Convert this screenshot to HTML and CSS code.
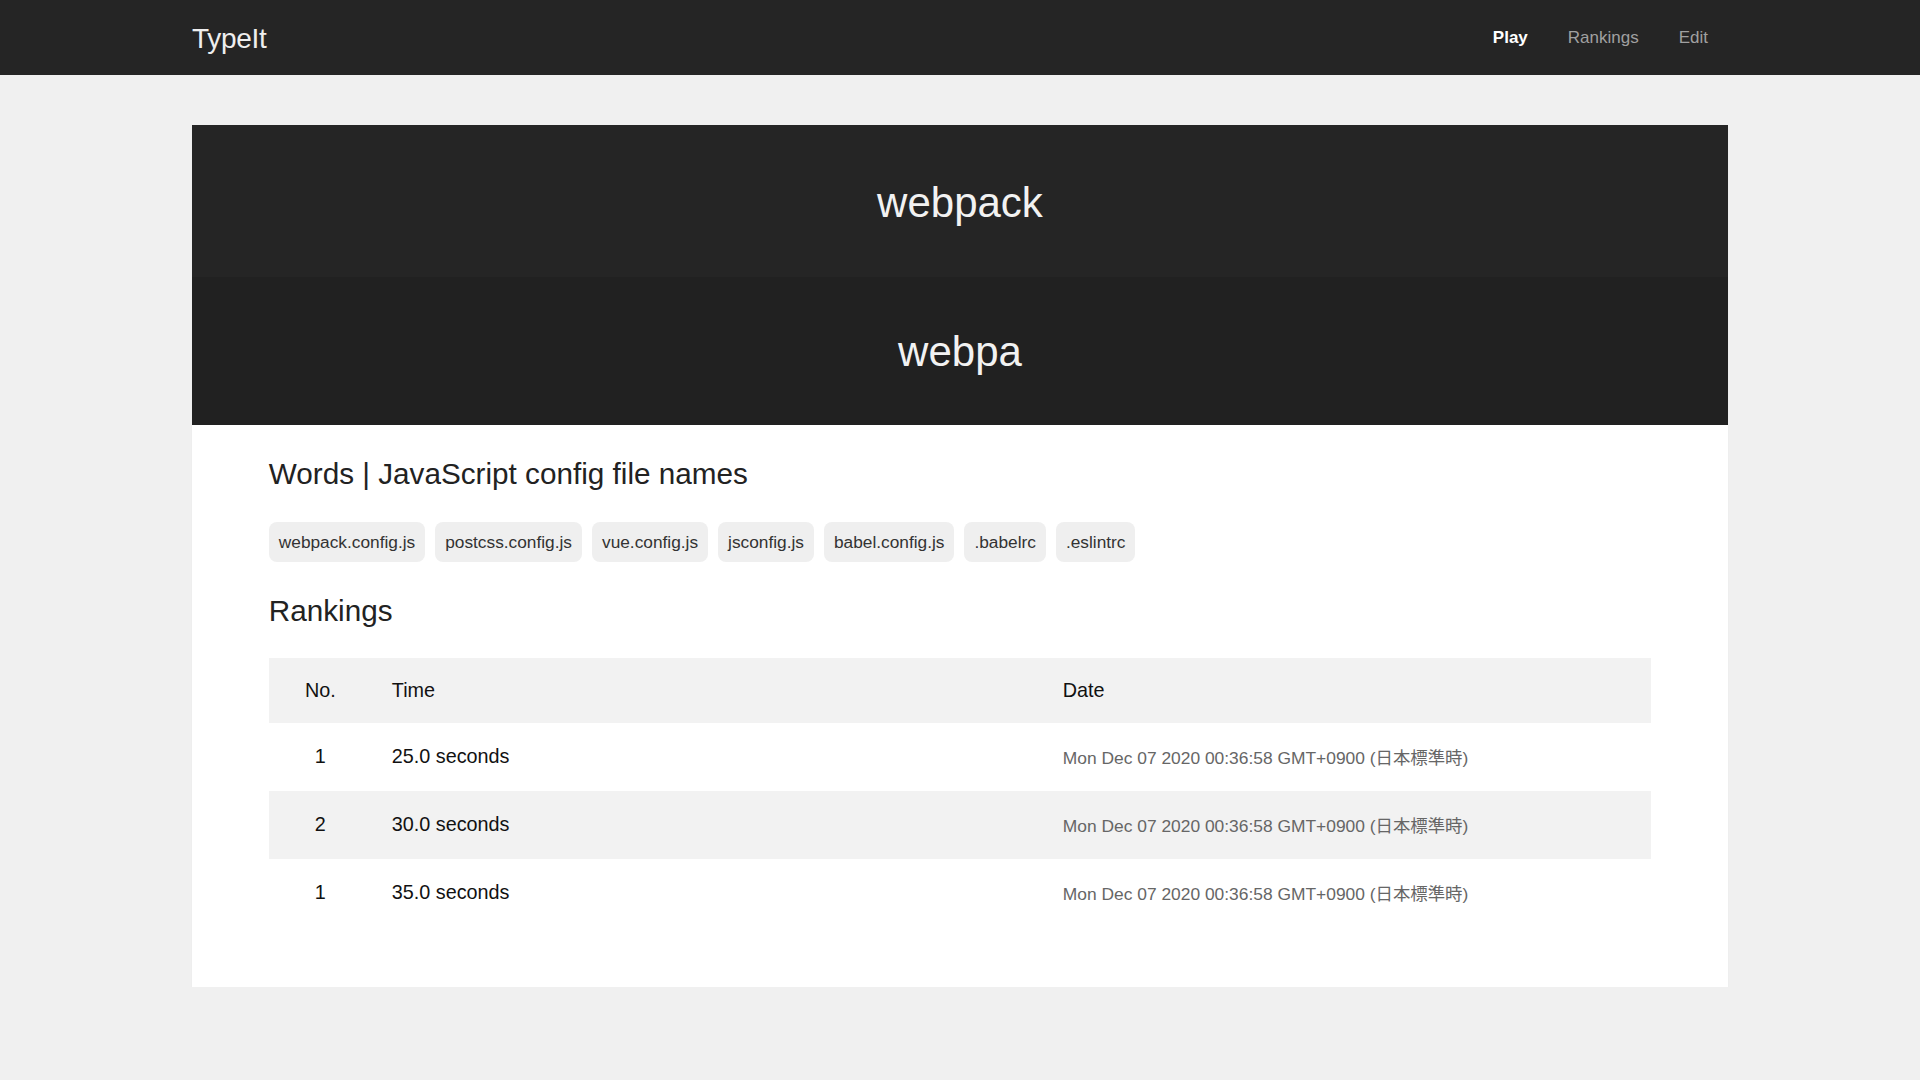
FILE: index.html
```html
<!DOCTYPE html>
<html lang="ja">
<head>
<meta charset="utf-8">
<title>TypeIt</title>
<link rel="stylesheet" href="styles.css">
</head>
<body>
<header class="navbar">
  <div class="nav-inner">
    <div class="logo">TypeIt</div>
    <nav class="nav-links">
      <a class="nav-link active">Play</a>
      <a class="nav-link">Rankings</a>
      <a class="nav-link">Edit</a>
    </nav>
  </div>
</header>
<main class="card">
  <section class="target">webpack</section>
  <section class="typed">webpa</section>
  <section class="content">
    <h2 class="heading">Words | JavaScript config file names</h2>
    <ul class="tags">
      <li class="tag">webpack.config.js</li>
      <li class="tag">postcss.config.js</li>
      <li class="tag">vue.config.js</li>
      <li class="tag">jsconfig.js</li>
      <li class="tag">babel.config.js</li>
      <li class="tag">.babelrc</li>
      <li class="tag">.eslintrc</li>
    </ul>
    <h2 class="heading rank-heading">Rankings</h2>
    <table class="ranking">
      <thead>
        <tr><th class="col-no">No.</th><th class="col-time">Time</th><th class="col-date">Date</th></tr>
      </thead>
      <tbody>
        <tr><td class="col-no">1</td><td class="col-time">25.0 seconds</td><td class="col-date date">Mon Dec 07 2020 00:36:58 GMT+0900 (日本標準時)</td></tr>
        <tr><td class="col-no">2</td><td class="col-time">30.0 seconds</td><td class="col-date date">Mon Dec 07 2020 00:36:58 GMT+0900 (日本標準時)</td></tr>
        <tr><td class="col-no">1</td><td class="col-time">35.0 seconds</td><td class="col-date date">Mon Dec 07 2020 00:36:58 GMT+0900 (日本標準時)</td></tr>
      </tbody>
    </table>
  </section>
</main>
</body>
</html>
```
FILE: styles.css
```css
* { box-sizing: border-box; }
html, body { margin: 0; padding: 0; }
body {
  background: #f0f0f0;
  font-family: "Liberation Sans", Arial, "Noto Sans CJK JP", sans-serif;
  color: #222;
}
.navbar {
  background: #252525;
  height: 75px;
}
.nav-inner {
  width: 80%;
  margin: 0 auto;
  height: 100%;
  display: flex;
  align-items: center;
  justify-content: space-between;
}
.logo {
  color: #eeeeee;
  font-size: 28px;
  letter-spacing: -0.3px;
  padding-top: 2px;
}
.nav-links { display: flex; }
.nav-link {
  color: #a0a0a0;
  font-size: 17px;
  padding: 0 20px;
  text-decoration: none;
}
.nav-link.active { color: #ffffff; font-weight: bold; }
.card {
  width: 80%;
  margin: 50px auto 0;
  background: #ffffff;
  box-shadow: 0 2px 2px rgba(0,0,0,0.03);
}
.target, .typed {
  color: #f2f2f2;
  font-size: 42px;
  text-align: center;
  line-height: 48px;
}
.target { background: #252525; padding: 54px 0 50px; }
.typed { background: #212121; padding: 51px 0 49px; }
.content { padding: 31px 5% 60px; }
.heading {
  font-weight: normal;
  font-size: 29.7px;
  line-height: 36px;
  margin: 0;
  color: #222;
}
.tags {
  list-style: none;
  margin: 30px 0 0;
  padding: 0;
  display: flex;
  flex-wrap: wrap;
  gap: 10px;
}
.tag {
  background: #efefef;
  border-radius: 8px;
  height: 40px;
  line-height: 40px;
  padding: 0 10px;
  font-size: 17.3px;
  color: #333;
}
.rank-heading { margin-top: 31px; }
.ranking {
  width: 100%;
  border-collapse: collapse;
  margin-top: 29px;
  font-size: 19.8px;
}
.ranking th {
  background: #f2f2f2;
  font-weight: normal;
  height: 65px;
  text-align: left;
  color: #111;
}
.ranking td { height: 68px; color: #111; padding-bottom: 2px; }
.ranking tbody tr:nth-child(2) td { background: #f2f2f2; }
.col-no { width: 103px; text-align: center !important; }
.col-time { width: 671px; padding-left: 20px; padding-right: 20px; }
.col-date { padding-left: 20px; padding-right: 20px; }
.date { font-size: 17.4px; color: #666 !important; }
```
